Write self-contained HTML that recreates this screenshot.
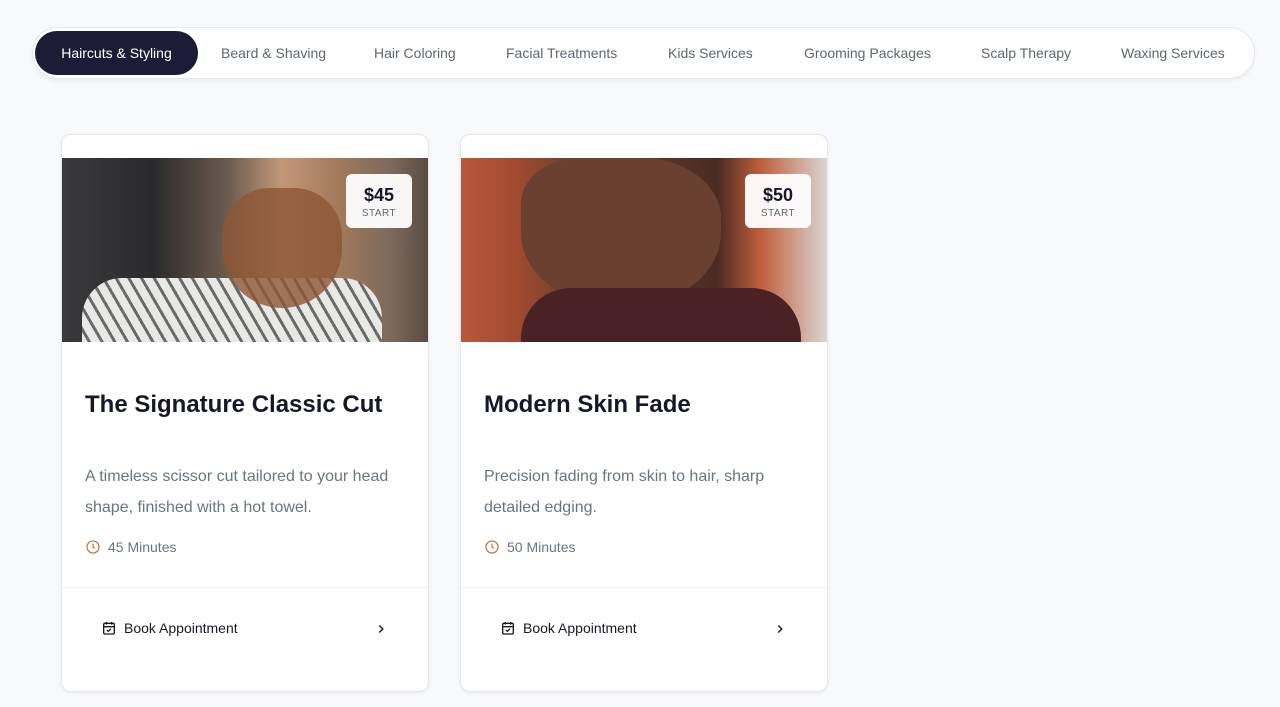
<!DOCTYPE html><html><head><style>
*{box-sizing:border-box;margin:0;padding:0}
body{width:1280px;height:707px;background:#f8f9fb;font-family:"Liberation Sans",sans-serif;position:relative;overflow:hidden}
.nav{position:absolute;left:32px;top:27px;width:1223px;height:52px;background:#fff;border:1px solid #e6e8ec;border-radius:26px;box-shadow:0 2px 4px rgba(0,0,0,.05)}
.nav span{position:absolute;top:17px;font-size:14px;color:#5d6577}
.nav .act{left:2px;top:3px;height:44px;width:163px;background:#1d1c36;color:#fff;border-radius:22px;line-height:44px;text-align:center}
.card{position:absolute;top:134px;width:368px;height:558px;background:#fff;border:1px solid #e6e8ec;border-radius:10px;box-shadow:0 1px 3px rgba(0,0,0,.06)}
.img{position:absolute;left:0;top:23px;width:366px;height:184px;overflow:hidden}
.price{position:absolute;right:16px;top:16px;width:66px;height:54px;background:rgba(255,255,255,.95);border-radius:6px;text-align:center}
.price b{display:block;font-size:18px;color:#15172a;margin-top:11px}
.price i{display:block;font-style:normal;font-size:10px;color:#5d6577;letter-spacing:.5px;margin-top:2px}
h2{position:absolute;left:23px;top:256px;font-size:24px;font-weight:bold;color:#15172a}
p{position:absolute;left:23px;top:326px;width:330px;font-size:16px;line-height:31px;color:#6a7386}
.dur{position:absolute;left:23px;top:404px;font-size:14px;color:#6a7386;display:flex;align-items:center;gap:7px}
.div{position:absolute;left:0;right:0;top:452px;border-top:1px solid #f0f1f4}
.book{position:absolute;left:39px;top:485px;font-size:14px;color:#15172a;display:flex;align-items:center;gap:7px}
.chev{position:absolute;right:40px;top:487px}
</style></head><body>
<div class="nav">
<span class="act">Haircuts &amp; Styling</span>
<span style="left:188px">Beard &amp; Shaving</span>
<span style="left:341px">Hair Coloring</span>
<span style="left:473px">Facial Treatments</span>
<span style="left:635px">Kids Services</span>
<span style="left:771px">Grooming Packages</span>
<span style="left:948px">Scalp Therapy</span>
<span style="left:1088px">Waxing Services</span>
</div>

<div class="card" style="left:61px">
<div class="img" style="background:linear-gradient(90deg,#3a3a3c 0%,#2a2a2c 25%,#6b5a4e 45%,#c29878 60%,#a37a5c 75%,#7b6a5c 90%,#5a4a40 100%)">
<div style="position:absolute;left:20px;top:120px;width:300px;height:70px;background:repeating-linear-gradient(60deg,#e8e8e6 0 8px,#6a6a6a 8px 11px);border-radius:40px 40px 0 0"></div>
<div style="position:absolute;left:160px;top:30px;width:120px;height:120px;background:#8c5634;border-radius:40% 40% 50% 50%;opacity:.8"></div>
<div class="price"><b>$45</b><i>START</i></div></div>
<h2>The Signature Classic Cut</h2>
<p>A timeless scissor cut tailored to your head shape, finished with a hot towel.</p>
<div class="dur"><svg width="16" height="16" viewBox="0 0 24 24" fill="none" stroke="#c77a45" stroke-width="2"><circle cx="12" cy="12" r="9"/><path d="M12 7v5l3 2"/></svg>45 Minutes</div>
<div class="div"></div>
<div class="book"><svg width="16" height="16" viewBox="0 0 24 24" fill="none" stroke="#15172a" stroke-width="2"><rect x="4" y="5" width="16" height="16" rx="2"/><path d="M8 3v4M16 3v4M4 10h16M9 15l2 2 4-4"/></svg>Book Appointment</div>
<svg class="chev" width="14" height="14" viewBox="0 0 24 24" fill="none" stroke="#15172a" stroke-width="2.5"><path d="M9 6l6 6-6 6"/></svg>
</div>

<div class="card" style="left:460px">
<div class="img" style="background:linear-gradient(90deg,#b8583a 0%,#a24a30 15%,#6e4030 30%,#5a3424 55%,#4a2a22 70%,#c0603c 82%,#d9d6d4 100%)">
<div style="position:absolute;left:60px;top:0;width:200px;height:150px;background:#6a4030;border-radius:30% 40% 50% 50%"></div>
<div style="position:absolute;left:60px;top:130px;width:280px;height:60px;background:#4a2226;border-radius:50px 50px 0 0"></div>
<div class="price"><b>$50</b><i>START</i></div></div>
<h2>Modern Skin Fade</h2>
<p>Precision fading from skin to hair, sharp detailed edging.</p>
<div class="dur"><svg width="16" height="16" viewBox="0 0 24 24" fill="none" stroke="#c77a45" stroke-width="2"><circle cx="12" cy="12" r="9"/><path d="M12 7v5l3 2"/></svg>50 Minutes</div>
<div class="div"></div>
<div class="book"><svg width="16" height="16" viewBox="0 0 24 24" fill="none" stroke="#15172a" stroke-width="2"><rect x="4" y="5" width="16" height="16" rx="2"/><path d="M8 3v4M16 3v4M4 10h16M9 15l2 2 4-4"/></svg>Book Appointment</div>
<svg class="chev" width="14" height="14" viewBox="0 0 24 24" fill="none" stroke="#15172a" stroke-width="2.5"><path d="M9 6l6 6-6 6"/></svg>
</div>
</body></html>
